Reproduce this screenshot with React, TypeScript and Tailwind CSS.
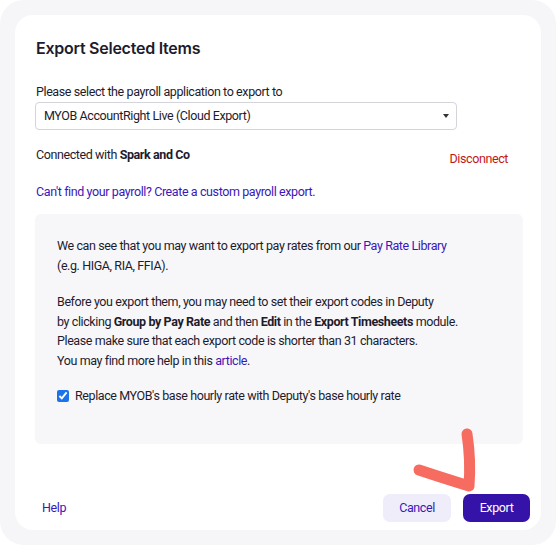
const App = () => {
  return (
    <div className="relative w-[556px] h-[548px] bg-white font-['Roboto',sans-serif] text-[#1e1b2e] tracking-[-0.4px]">
      <div className="h-[545px] bg-[#f6f6f9] rounded-[24px] p-[15px]">
        <div className="h-full bg-white rounded-[18px] flex flex-col px-[21px] pt-[23px] pb-[11px]">
          <h1 className="font-['Inter',sans-serif] text-[16px] font-semibold leading-[20px] mb-[26px] tracking-[-0.25px]">Export Selected Items</h1>

          <label className="text-[12.5px] leading-[16px] mb-[2px]">Please select the payroll application to export to</label>
          <div className="w-[422px] h-[28px] border border-[#d4d4dc] rounded-[4px] flex items-center justify-between pl-[8px] pr-[7px] text-[12.5px] -ml-[1px]">
            <span>MYOB AccountRight Live (Cloud Export)</span>
            <svg width="6" height="4" viewBox="0 0 6 4"><path d="M0 0h6L3 4z" fill="#333" /></svg>
          </div>

          <div className="flex justify-between items-start mt-[17px] pr-[12px]">
            <p className="text-[12.5px] leading-[16px]">Connected with <b>Spark and Co</b></p>
            <button className="text-[12.5px] leading-[16px] text-[#c01818] mt-[4px]">Disconnect</button>
          </div>

          <a className="text-[12.5px] leading-[16px] text-[#3a17b8] mt-[17px]">Can't find your payroll? Create a custom payroll export.</a>

          <div className="mt-[14px] bg-[#f7f7fa] rounded-[6px] h-[230px] w-[488px] -ml-[1px] px-[22px] pt-[22px] text-[12.5px] leading-[19.5px]">
            <p>
              We can see that you may want to export pay rates from our <a className="text-[#3a17b8]">Pay Rate Library</a>
              <br />
              (e.g. HIGA, RIA, FFIA).
            </p>
            <p className="mt-[17px]">
              Before you export them, you may need to set their export codes in Deputy
              <br />
              by clicking <b>Group by Pay Rate</b> and then <b>Edit</b> in the <b>Export Timesheets</b> module.
              <br />
              Please make sure that each export code is shorter than 31 characters.
              <br />
              You may find more help in this <a className="text-[#3a17b8]">article</a>.
            </p>
            <label className="flex items-center gap-[6px] mt-[16px]">
              <input type="checkbox" defaultChecked className="w-[12px] h-[12px] accent-[#1a73e8]" />
              <span>Replace MYOB's base hourly rate with Deputy's base hourly rate</span>
            </label>
          </div>

          <div className="mt-auto flex items-center justify-between pl-[6px] -mr-[10px] mb-[-3px]">
            <a className="text-[12.5px] text-[#3a17b8]">Help</a>
            <div className="flex gap-[12px]">
              <button className="w-[68px] h-[28px] rounded-[7px] bg-[#efedf9] text-[12.5px] text-[#3a17b8]">Cancel</button>
              <button className="w-[67px] h-[28px] rounded-[7px] bg-[#3512a8] text-[12.5px] text-white">Export</button>
            </div>
          </div>
        </div>
      </div>

      <svg className="absolute left-0 top-0 pointer-events-none" width="556" height="548">
        <path d="M419 470 Q440 477 469 486 Q471 460 467 434" fill="none" stroke="#f66c60" strokeWidth="11" strokeLinecap="round" strokeLinejoin="round" />
      </svg>
    </div>
  );
};

export default App;
